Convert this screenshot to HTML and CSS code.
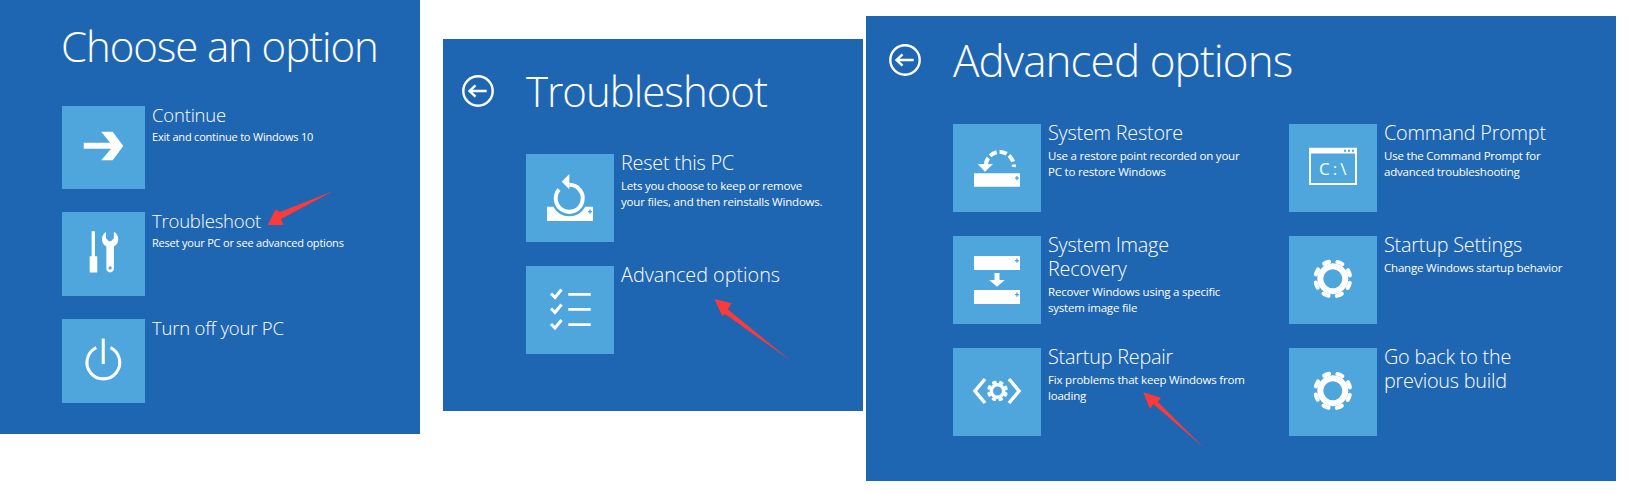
FILE: index.html
```html
<!DOCTYPE html>
<html lang="en">
<head>
<meta charset="utf-8">
<title>Windows recovery options</title>
<link rel="stylesheet" href="styles.css">
</head>
<body>
<svg width="0" height="0" class="defs" aria-hidden="true">
  <defs>
    <symbol id="i-gear" viewBox="0 0 88 88">
      <circle cx="43.8" cy="42.800" r="12.500" fill="none" stroke="#fff" stroke-width="6"/>
      <circle cx="43.8" cy="42.800" r="17.500" fill="none" stroke="#fff" stroke-width="4" stroke-linecap="round" stroke-dasharray="5.500 8.245" transform="rotate(13.500 43.8 42.800)"/>
    </symbol>
    <symbol id="i-back" viewBox="0 0 32 32">
      <circle cx="16" cy="16" r="14.700" fill="none" stroke="#fff" stroke-width="2.400"/>
      <path d="M24.700 16H7.500M13.500 10.300L7.500 16l6 5.700" fill="none" stroke="#fff" stroke-width="2.400"/>
    </symbol>
  </defs>
</svg>

<main class="desk">
  <section class="panel panel-choose">
    <h1 class="head head-choose">Choose an option</h1>
    <ul class="list list-choose">
      <li class="opt opt-short">
        <span class="tile tile-short"><svg class="ico" viewBox="0 0 84 84"><path d="M22 37.300H48.700L39.700 26H51.300L62 40.500 51.300 55H39.700L49.700 43.300H22Z"/></svg></span>
        <div class="txt"><h2 class="name">Continue</h2><p class="sub">Exit and continue to Windows 10</p></div>
      </li>
      <li class="opt">
        <span class="tile"><svg class="ico" viewBox="0 0 84 84"><path d="M30 19h3.300v25.300h2.400v16.400H28V44.300h2z"/><path fill-rule="evenodd" d="M44.500 19.500v6.500l3 3h2l3-3v-6.500c2.500 1.200 4.500 4.500 4.500 7.500 0 3.500-2 6-4.500 7.500V57c0 2-1.700 3.700-3.800 3.700s-3.800-1.700-3.800-3.700V34.500c-2.500-1.500-4.500-4-4.500-7.500 0-3 2-6.300 4.500-7.500zM48.700 54.500a1.600 1.600 0 1 0 0 3.200 1.600 1.600 0 0 0 0-3.200z"/></svg></span>
        <div class="txt"><h2 class="name">Troubleshoot</h2><p class="sub">Reset your PC or see advanced options</p></div>
      </li>
      <li class="opt">
        <span class="tile"><svg class="ico" viewBox="0 0 84 84"><path d="M40.200 19.300h3.100V45h-3.100z"/><path d="M34.700 28.500A16.600 16.600 0 1 0 49 28.500" fill="none" stroke="#fff" stroke-width="3.100"/></svg></span>
        <div class="txt"><h2 class="name">Turn off your PC</h2></div>
      </li>
    </ul>
  </section>

  <section class="panel panel-shoot">
    <header class="bar">
      <svg class="back"><use href="#i-back"/></svg>
      <h1 class="head head-shoot">Troubleshoot</h1>
    </header>
    <ul class="list list-wide">
      <li class="opt opt-wide">
        <span class="tile tile-wide"><svg class="ico" viewBox="0 0 88 88"><path d="M21 52.700H27.400A18 18 0 0 0 59.200 52.700H67V67H21Z"/><path d="M43.300 30.800A13.500 13.500 0 1 1 33 35.500" fill="none" stroke="#fff" stroke-width="4"/><path d="M43.300 20v15.300L35.700 27.700z"/><path d="M62 57h1.300v-1.500h1.300V57H66v1.300h-1.400v1.500h-1.300v-1.500H62z" class="dot"/></svg></span>
        <div class="txt"><h2 class="name name-wide">Reset this PC</h2><p class="sub sub-wide">Lets you choose to keep or remove<br>your files, and then reinstalls Windows.</p></div>
      </li>
      <li class="opt opt-wide">
        <span class="tile tile-wide"><svg class="ico" viewBox="0 0 88 88"><path d="M42.300 27h22.400v2.700H42.300zM42.300 42h22.400v2.700H42.300zM42.300 57.300h22.400V60H42.300z"/><path d="M25 27.500l4 4 6.500-8" class="chk"/><path d="M25 42.500l4 4 6.500-8" class="chk"/><path d="M25 58l4 4 6.500-8" class="chk"/></svg></span>
        <div class="txt"><h2 class="name name-wide name-open">Advanced options</h2></div>
      </li>
    </ul>
  </section>

  <section class="panel panel-adv">
    <header class="bar bar-adv">
      <svg class="back"><use href="#i-back"/></svg>
      <h1 class="head head-adv">Advanced options</h1>
    </header>
    <ul class="grid">
      <li class="opt opt-wide">
        <span class="tile tile-wide"><svg class="ico" viewBox="0 0 88 88"><path d="M21 49.300h46v13.400H21z"/><path d="M32.800 41A14 14 0 1 1 60.800 43" fill="none" stroke="#fff" stroke-width="4" stroke-dasharray="7.500 2.800"/><path d="M24.700 40H40L32 47.800z"/><path d="M62 53.500h1.300V52h1.300v1.500H66v1.300h-1.400v1.500h-1.300v-1.500H62z" class="dot"/></svg></span>
        <div class="txt"><h2 class="name name-wide">System Restore</h2><p class="sub sub-wide">Use a restore point recorded on your<br>PC to restore Windows</p></div>
      </li>
      <li class="opt opt-wide">
        <span class="tile tile-wide"><svg class="ico" viewBox="0 0 88 88"><path fill-rule="evenodd" d="M20 23.700h48V61H20zM22 29.500V59h44V29.500z"/><path d="M55 25.700h2v2h-2zM59 25.700h2v2h-2zM63 25.700h2v2h-2z" class="dot"/></svg><span class="cmd">C:\</span></span>
        <div class="txt"><h2 class="name name-wide">Command Prompt</h2><p class="sub sub-wide">Use the Command Prompt for<br>advanced troubleshooting</p></div>
      </li>
      <li class="opt opt-wide">
        <span class="tile tile-wide"><svg class="ico" viewBox="0 0 88 88"><path d="M21 20h46v14H21zM21 54h46v14H21z"/><path d="M41.500 37h5v7h5.300L44 50.700 36.200 44h5.300z"/><path d="M62 24h1.300v-1.500h1.300V24H66v1.300h-1.400v1.500h-1.300v-1.500H62zM62 58h1.300v-1.500h1.300V58H66v1.300h-1.400v1.500h-1.300v-1.500H62z" class="dot"/></svg></span>
        <div class="txt"><h2 class="name name-wide">System Image<br>Recovery</h2><p class="sub sub-wide">Recover Windows using a specific<br>system image file</p></div>
      </li>
      <li class="opt opt-wide">
        <span class="tile tile-wide"><svg class="ico"><use href="#i-gear"/></svg></span>
        <div class="txt"><h2 class="name name-wide">Startup Settings</h2><p class="sub sub-wide">Change Windows startup behavior</p></div>
      </li>
      <li class="opt opt-wide">
        <span class="tile tile-wide"><svg class="ico" viewBox="0 0 88 88"><path d="M32 31L22 43l10 12M56 31l10 12-10 12" fill="none" stroke="#fff" stroke-width="3.500"/><circle cx="44.500" cy="43" r="6.200" fill="none" stroke="#fff" stroke-width="3.500"/><circle cx="44.500" cy="43" r="9" fill="none" stroke="#fff" stroke-width="3" stroke-linecap="round" stroke-dasharray="1.800 5.269" transform="rotate(17 44.500 43)"/></svg></span>
        <div class="txt"><h2 class="name name-wide">Startup Repair</h2><p class="sub sub-wide">Fix problems that keep Windows from<br>loading</p></div>
      </li>
      <li class="opt opt-wide">
        <span class="tile tile-wide"><svg class="ico"><use href="#i-gear"/></svg></span>
        <div class="txt"><h2 class="name name-wide">Go back to the<br>previous build</h2></div>
      </li>
    </ul>
  </section>

  <svg class="marks" viewBox="0 0 1631 493" aria-hidden="true">
    <path d="M333.300 191L280 212 275.500 209.500 267.700 225H283.500L281 219Z"/>
    <path d="M714.300 299L731.700 303.300 727.700 309.300 791 361 725 314 722.300 316Z"/>
    <path d="M1143.300 392.300L1161 397.700 1157.700 401.700 1203.300 447.300 1153.300 404 1150 409Z"/>
  </svg>
</main>
</body>
</html>
```

FILE: styles.css
```css
* { box-sizing: border-box; }
html, body { margin: 0; padding: 0; background: #fff; }
body { font-family: "Open Sans", "Noto Sans", sans-serif; color: #fff; width: 1631px; height: 493px; overflow: hidden; }
ul { list-style: none; margin: 0; padding: 0; }
h1, h2, p { margin: 0; font-weight: 300; }
.defs { position: absolute; }

.desk { display: flex; align-items: flex-start; position: relative; width: 1631px; height: 493px; }
.panel { background: #1f66b2; flex: none; }
.panel-choose { width: 420px; height: 434px; padding: 16px 0 0 62px; }
.panel-shoot { width: 420px; height: 372px; margin: 39px 0 0 23px; padding: 21.5px 0 0 19px; }
.panel-adv { width: 750px; height: 465px; margin: 16px 0 0 3px; padding: 14px 0 0 23px; }

.bar { display: flex; align-items: center; height: 60px; gap: 32px; }
.back { width: 32px; height: 32px; flex: none; }

.head { line-height: 60px; white-space: nowrap; }
.head-choose { font-size: 42px; height: 60px; letter-spacing: -1.100px; margin-left: -1px; }
.head-shoot { font-size: 42px; letter-spacing: -1px; }
.head-adv { font-size: 44px; letter-spacing: -0.900px; }

.list { display: flex; flex-direction: column; }
.list-choose { margin-top: 30px; gap: 23px; }
.list-wide { margin: 33.5px 0 0 64px; gap: 24px; }
.grid { display: grid; grid-template-columns: 336px 248px; row-gap: 24px; margin: 34px 0 0 64px; }

.opt { display: flex; gap: 7px; height: 84px; }
.opt-short { height: 83px; }
.opt-wide { gap: 7px; height: 88px; }
.tile { background: #4ea6dd; width: 83px; height: 84px; flex: none; display: block; position: relative; }
.tile-short { height: 83px; }
.tile-wide { width: 88px; height: 88px; }
.ico { width: 100%; height: 100%; display: block; fill: #fff; }
.chk { fill: none; stroke: #fff; stroke-width: 3; }
.dot { fill: #4ea6dd; }
.cmd { position: absolute; left: 30px; top: 33px; font-size: 17px; line-height: 24px; color: #fff; letter-spacing: 3px; }

.txt { margin-top: -3.500px; }
.name { font-size: 18.500px; line-height: 24px; white-space: nowrap; letter-spacing: -0.200px; margin-bottom: 2px; }
.name-wide { font-size: 19.800px; margin-bottom: 3.500px; }
.name-open { letter-spacing: 0; }
.sub { font-size: 11px; line-height: 16px; white-space: nowrap; font-weight: 400; letter-spacing: -0.200px; }
.sub-wide { font-size: 11.500px; }

.marks { position: absolute; left: 0; top: 0; width: 1631px; height: 493px; fill: #fb3a3a; pointer-events: none; }
```
